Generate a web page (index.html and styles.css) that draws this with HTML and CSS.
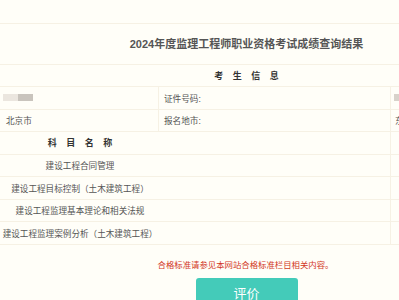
FILE: index.html
```html
<!DOCTYPE html>
<html lang="zh-CN">
<head>
  <meta charset="UTF-8">
  <title>成绩查询结果</title>
  <link rel="stylesheet" href="styles.css">
</head>
<body>
  <div class="page">
    <div class="title-row">
      <h1>2024年度监理工程师职业资格考试成绩查询结果</h1>
    </div>
    <div class="section-head">考 生 信 息</div>
    <div class="info-row">
      <div class="cell"><span class="blurred"><i></i><i></i></span></div>
      <div class="cell">证件号码:</div>
      <div class="cell"><span class="blurred small"><i></i></span></div>
    </div>
    <div class="info-row">
      <div class="cell">北京市</div>
      <div class="cell">报名地市:</div>
      <div class="cell">东城区</div>
    </div>

    <div class="subject-row head">
      <div class="name">科 目 名 称</div>
      <div></div>
      <div class="cell"></div>
    </div>
    <div class="subject-row">
      <div class="name">建设工程合同管理</div>
      <div></div>
      <div class="cell"></div>
    </div>
    <div class="subject-row">
      <div class="name">建设工程目标控制（土木建筑工程）</div>
      <div></div>
      <div class="cell"></div>
    </div>
    <div class="subject-row">
      <div class="name">建设工程监理基本理论和相关法规</div>
      <div></div>
      <div class="cell"></div>
    </div>
    <div class="subject-row">
      <div class="name">建设工程监理案例分析（土木建筑工程）</div>
      <div></div>
      <div class="cell"></div>
    </div>

    <p class="notice">合格标准请参见本网站合格标准栏目相关内容。</p>
    <button class="rate-btn">评价</button>
  </div>
</body>
</html>
```

FILE: styles.css
```css
body {
  margin: 0;
  background: #fffef8;
  font-family: "Liberation Sans", "Noto Sans CJK SC", sans-serif;
  color: #555;
  overflow: hidden;
}
.page {
  width: 493px;
  padding-top: 23px;
  display: flex;
  flex-direction: column;
  align-items: center;
}
.title-row {
  width: 100%;
  height: 42px;
  box-sizing: border-box;
  border-top: 1px solid #f6f1e4;
  border-bottom: 1px solid #f6f1e4;
  display: flex;
  align-items: center;
  justify-content: center;
  padding-bottom: 3px;
}
.title-row h1 {
  margin: 0;
  font-size: 11px;
  font-weight: bold;
  color: #555;
}
.section-head {
  width: 100%;
  height: 22px;
  box-sizing: border-box;
  border-bottom: 1px solid #f6f1e4;
  display: flex;
  align-items: center;
  justify-content: center;
  font-size: 9px;
  font-weight: bold;
  color: #333;
  word-spacing: 7px;
}
.info-row, .subject-row {
  width: 100%;
  height: 22.5px;
  box-sizing: border-box;
  display: grid;
  grid-template-columns: 158px 232px 1fr;
  border-bottom: 1px solid #f6f1e4;
  font-size: 8.6px;
}
.cell {
  display: flex;
  align-items: center;
  padding-left: 5px;
  border-left: 1px solid #f6f1e4;
}
.info-row .cell:first-child {
  border-left: none;
  padding-left: 6px;
}
.info-row .cell:last-child {
  padding-left: 4px;
}
.blurred {
  display: flex;
  filter: blur(0.6px);
  margin-left: -3px;
}
.blurred i {
  width: 15px;
  height: 7px;
  background: #ebe6df;
}
.blurred i + i {
  background: #c9c4bd;
}
.blurred.small i {
  width: 6px;
  background: #d8d2ca;
  margin-left: 2px;
}
.subject-row .name {
  display: flex;
  align-items: center;
  justify-content: center;
  padding-left: 2px;
  white-space: nowrap;
}
.subject-row.head .name {
  font-size: 9px;
  font-weight: bold;
  color: #333;
  word-spacing: 7px;
}
.notice {
  margin: 15px 0 0 0;
  font-size: 8.4px;
  line-height: 10px;
  color: #d2381f;
  padding-right: 2px;
}
.rate-btn {
  margin-top: 8px;
  width: 102px;
  height: 30px;
  border: none;
  border-radius: 3px;
  background: #44cbb9;
  color: #fff;
  font-family: "Noto Sans CJK SC", sans-serif;
  font-size: 13px;
  padding: 0;
}
```
